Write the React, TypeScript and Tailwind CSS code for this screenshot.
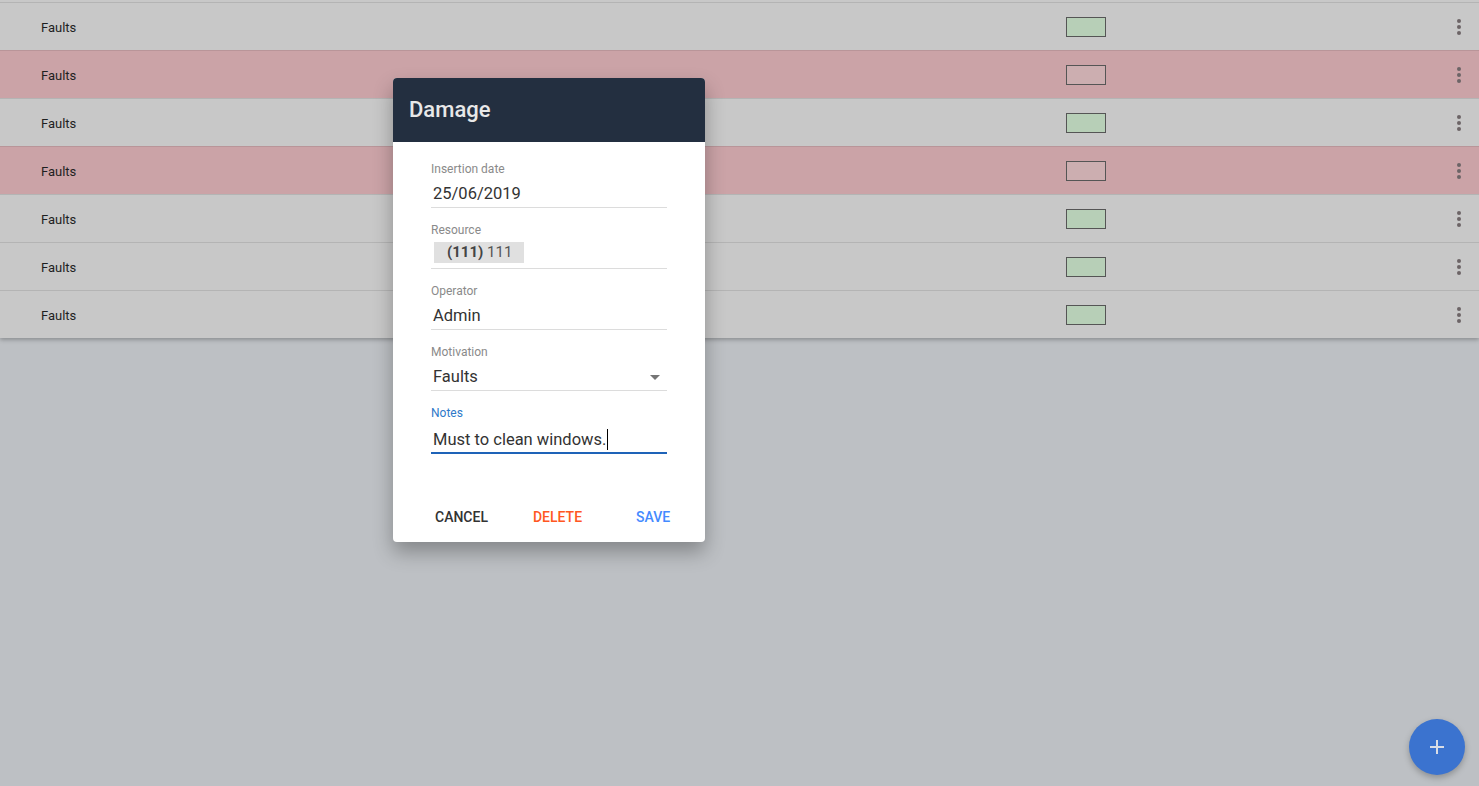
import React from 'react';

const rows = [
  { fault: false },
  { fault: true },
  { fault: false },
  { fault: true },
  { fault: false },
  { fault: false },
  { fault: false },
];

const Field: React.FC<{ label: string; active?: boolean; children: React.ReactNode }> = ({ label, active, children }) => (
  <div className="flex flex-col">
    <span className={`text-[12px] leading-[12px] pt-[1px] ${active ? 'text-[#2f79c9]' : 'text-[#8a8a8a]'}`}>{label}</span>
    <div
      className={`flex items-end ${
        active ? 'border-b-2 border-[#1e63b8] h-[35px] pb-[2px]' : 'border-b border-[#dcdcdc] h-[33px] pb-[3px]'
      }`}
    >
      {children}
    </div>
  </div>
);

export default function App() {
  return (
    <div className="relative w-[1479px] h-[786px] overflow-hidden bg-[#bdc0c4] font-['Roboto',sans-serif]">
      {/* Table */}
      <div className="bg-[#c8c8c8] pt-[2px] shadow-[0_2px_4px_rgba(0,0,0,0.25)]">
        {rows.map((r, i) => (
          <div
            key={i}
            className={`h-[48px] border-t border-[#b4b4b4] flex items-center ${r.fault ? 'bg-[#cba3a7] border-[#b99599]' : 'bg-[#c8c8c8]'}`}
          >
            <span className="pl-[41px] pt-[2px] text-[13px] text-[#1f1f1f] w-[1066px]">Faults</span>
            <div
              className={`w-[40px] h-[20px] border border-[#555] ${r.fault ? 'bg-[#ccaeb0]' : 'bg-[#b7cfb7]'}`}
            />
            <div className="ml-auto mr-[18px] flex flex-col gap-[2px] items-center">
              <span className="w-[4px] h-[4px] rounded-full bg-[#6c6466]" />
              <span className="w-[4px] h-[4px] rounded-full bg-[#6c6466]" />
              <span className="w-[4px] h-[4px] rounded-full bg-[#6c6466]" />
            </div>
          </div>
        ))}
      </div>

      {/* Dialog */}
      <div className="absolute left-[393px] top-[78px] w-[312px] h-[464px] bg-white rounded-[4px] overflow-hidden shadow-[0_10px_20px_rgba(0,0,0,0.3)] flex flex-col">
        <div className="h-[64px] bg-[#232f40] flex items-center px-[16px]">
          <span className="text-[22px] font-medium text-[#e8e8e8] -mt-[2px]">Damage</span>
        </div>
        <div className="px-[38px] pt-[20px] flex flex-col gap-[15px]">
          <Field label="Insertion date">
            <span className="text-[16.5px] leading-[20px] text-[#333] pl-[2px]">25/06/2019</span>
          </Field>
          <Field label="Resource">
            <span className="bg-[#e0e0e0] text-[15px] text-[#555] pl-[13px] pr-[12px] h-[21px] leading-[21px] ml-[3px] mb-[2px]">
              <b className="font-bold text-[#444]">(111)</b> 111
            </span>
          </Field>
          <Field label="Operator">
            <span className="text-[16.5px] leading-[20px] text-[#333] pl-[2px]">Admin</span>
          </Field>
          <Field label="Motivation">
            <div className="flex items-center w-full">
              <span className="text-[16.5px] leading-[20px] text-[#333] pl-[2px]">Faults</span>
              <span className="ml-auto mr-[7px] w-0 h-0 border-l-[5px] border-r-[5px] border-t-[5px] border-l-transparent border-r-transparent border-t-[#757575]" />
            </div>
          </Field>
          <Field label="Notes" active>
            <span className="text-[16.5px] leading-[20px] text-[#333] pl-[2px] flex items-center">
              Must to clean windows.
              <span className="inline-block w-px h-[21px] bg-black ml-[1px]" />
            </span>
          </Field>
        </div>
        <div className="mt-auto mb-[14px] flex items-center text-[14px] font-medium">
          <span className="ml-[42px] text-[#333]">CANCEL</span>
          <span className="ml-[45px] text-[#ff5722]">DELETE</span>
          <span className="ml-[54px] text-[#448aff]">SAVE</span>
        </div>
      </div>

      {/* FAB */}
      <button className="absolute left-[1409px] top-[719px] w-[56px] h-[56px] rounded-full bg-[#3b73cf] flex items-center justify-center shadow-[0_3px_6px_rgba(0,0,0,0.25)]">
        <svg width="16" height="16" viewBox="0 0 16 16">
          <path d="M8 1v14M1 8h14" stroke="#d9dde6" strokeWidth="2" />
        </svg>
      </button>
    </div>
  );
}
